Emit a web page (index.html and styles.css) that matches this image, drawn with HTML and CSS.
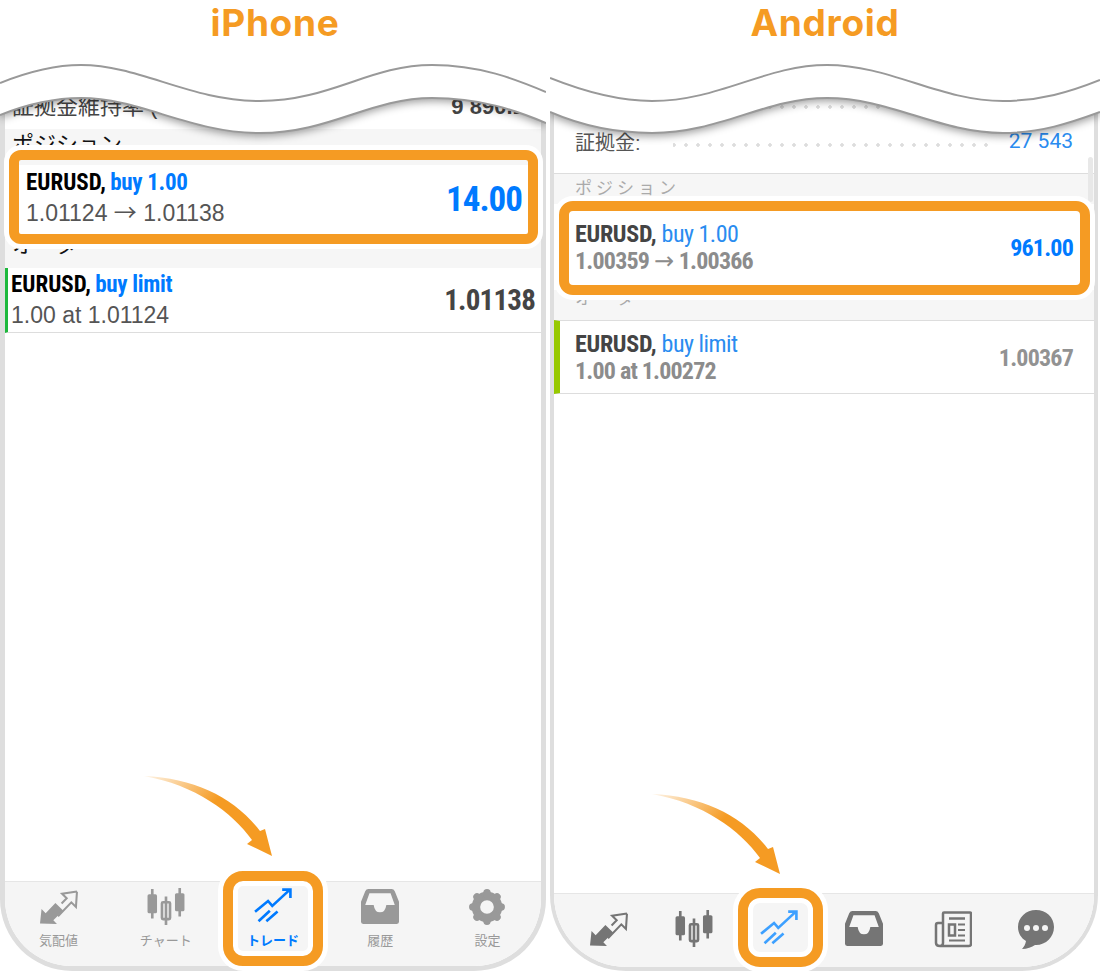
FILE: index.html
```html
<!DOCTYPE html>
<html lang="ja">
<head>
    <meta charset="UTF-8">
    <meta name="viewport" content="width=device-width, initial-scale=1.0">
    <title>iPhone / Android</title>
    <link rel="stylesheet" href="styles.css">
</head>
<body>
    <svg class="defs" width="0" height="0">
        <defs>
            <linearGradient id="arrowFade" x1="0" y1="0" x2="1" y2="0.6">
                <stop offset="0" stop-color="#f59b23" stop-opacity="0.1"/>
                <stop offset="0.55" stop-color="#f59b23"/>
            </linearGradient>
        </defs>
        <symbol id="i-exchange" viewBox="0 0 37 36">
            <path fill="currentColor" d="M0 34 1.500 20l4 4 9.500-10 7.500 7.500L13 31l3.500 3.500z"/>
            <path fill="none" stroke="currentColor" stroke-width="2" d="M36 3 21.500 5l4.500 4.500-5 5M36 3l-1 15-4.500-4.500L17.500 27"/>
        </symbol>
        <symbol id="i-candles" viewBox="0 0 36 36">
            <path fill="none" stroke="currentColor" stroke-width="2.500" d="M5 1v28M18 8v27M31 0v27"/>
            <rect fill="currentColor" x="0.500" y="6" width="9" height="18" rx="1.500"/>
            <rect fill="currentColor" x="26.500" y="5" width="9" height="17" rx="1.500"/>
            <rect fill="none" stroke="currentColor" stroke-width="2.500" x="14.200" y="13.500" width="7.600" height="16" rx="1"/>
        </symbol>
        <symbol id="i-trade" viewBox="0 0 36 36">
            <path fill="none" stroke="currentColor" stroke-width="2.500" d="M1 22.500 13.300 12.300l4 4.700L33.500 2M26.700 1.500H34.500V9.500M4.300 31.500 15 21.500M11.700 31.500l10.600-9.200"/>
        </symbol>
        <symbol id="i-inbox" viewBox="0 0 36 36">
            <path fill="currentColor" fill-rule="evenodd" d="M7 1H29q2 0 3 2l4 10V32q0 2-2 2H2q-2 0-2-2V13L4 3q1-2 3-2zM8 5 4 16h8q1 7 6 7t6-7h8L28 5z"/>
        </symbol>
        <symbol id="i-gear" viewBox="0 0 36 36">
            <circle cx="18" cy="18" r="10.500" fill="none" stroke="currentColor" stroke-width="8"/>
            <path fill="none" stroke="currentColor" stroke-width="7" stroke-linecap="round" d="M18 4.500v2M18 29.500v2M4.500 18h2M29.500 18h2M8.500 8.500l1.400 1.400M26.100 26.100l1.400 1.400M27.500 8.500l-1.400 1.400M9.900 26.100l-1.400 1.400"/>
        </symbol>
        <symbol id="i-news" viewBox="0 0 38 38">
            <g fill="none" stroke="currentColor" stroke-width="2.500">
                <path d="M10 2.500q-1 0-1 1V33q0 3-3 3h29q2 0 2-2V3.500q0-1-1-1zM6 36q-4 0-4-3V15q0-2 2-2h5"/>
                <path d="M15 8.500H31"/>
                <rect x="15" y="14.500" width="6" height="11"/>
                <path d="M24 14.500h7M24 20h7M24 25.500h7M15 30.500H31" stroke-width="2"/>
            </g>
        </symbol>
        <symbol id="i-chat" viewBox="0 0 36 40">
            <path fill="currentColor" d="M18 0C8 0 0 7.500 0 17c0 6 3 11 8 14-.5 3-2 6-4 8 5 0 10-2 13-4h1c10 0 18-8 18-18S28 0 18 0z"/>
            <circle cx="9" cy="18" r="3" fill="#f5f5f5"/>
            <circle cx="18" cy="18" r="3" fill="#f5f5f5"/>
            <circle cx="27" cy="18" r="3" fill="#f5f5f5"/>
        </symbol>
        <symbol id="i-arrow" viewBox="0 0 130 82">
            <path fill="url(#arrowFade)" d="M0 0C51 2 91 22 116 55l5-2 7 27-25-12 5-4C88 36 51 9 0 0z"/>
        </symbol>
    </svg>

    <main class="sheet">
        <section class="col">
            <h2 class="title">iPhone</h2>
            <div class="phone ios">
                <div class="list">
                    <div class="summary">
                        <span>証拠金維持率 (%):</span>
                        <b>9 890.17</b>
                    </div>
                    <div class="group first">ポジション</div>
                    <div class="trade position">
                        <div class="trade-text">
                            <p class="pair">EURUSD, <span class="side">buy 1.00</span></p>
                            <p class="detail">1.01124 <span class="to">→</span> 1.01138</p>
                        </div>
                        <b class="amount">14.00</b>
                        <span class="mark"></span>
                    </div>
                    <div class="group">オーダー</div>
                    <div class="trade order">
                        <div class="trade-text">
                            <p class="pair">EURUSD, <span class="side">buy limit</span></p>
                            <p class="detail">1.00 at 1.01124</p>
                        </div>
                        <b class="amount">1.01138</b>
                    </div>
                </div>
                <nav class="tabs">
                    <a class="tab"><svg class="icon"><use href="#i-exchange"/></svg><span>気配値</span></a>
                    <a class="tab"><svg class="icon"><use href="#i-candles"/></svg><span>チャート</span></a>
                    <a class="tab active"><svg class="icon"><use href="#i-trade"/></svg><span>トレード</span><i class="mark"></i></a>
                    <a class="tab"><svg class="icon"><use href="#i-inbox"/></svg><span>履歴</span></a>
                    <a class="tab"><svg class="icon"><use href="#i-gear"/></svg><span>設定</span></a>
                </nav>
                <svg class="hint"><use href="#i-arrow"/></svg>
                <svg class="wave" viewBox="0 0 546 90" preserveAspectRatio="none">
                    <path class="wave-fill" d="M0 0H546V68C515 55 480 43 432 43 370 43 330 78 260 78 190 78 140 43 81 43 55 43 25 50 0 60z"/>
                    <path class="wave-line" d="M0 28C25 18 55 10 81 10 140 10 190 46 260 46 330 46 370 10 432 10 480 10 515 24 546 37"/>
                    <path class="wave-line" d="M0 60C25 50 55 43 81 43 140 43 190 78 260 78 330 78 370 43 432 43 480 43 515 55 546 68"/>
                </svg>
            </div>
        </section>

        <section class="col">
            <h2 class="title">Android</h2>
            <div class="phone android">
                <i class="scrollbar"></i>
                <div class="list">
                    <div class="summary">
                        <div class="balance"><span></span><i class="dots"></i><b></b></div>
                        <div class="balance"><span>証拠金:</span><i class="dots"></i><b>27 543</b></div>
                    </div>
                    <div class="group first">ポジション</div>
                    <div class="trade position">
                        <div class="trade-text">
                            <p class="pair">EURUSD, <span class="side">buy 1.00</span></p>
                            <p class="detail">1.00359 <span class="to">→</span> 1.00366</p>
                        </div>
                        <b class="amount">961.00</b>
                        <span class="mark"></span>
                    </div>
                    <div class="group">オーダー</div>
                    <div class="trade order">
                        <div class="trade-text">
                            <p class="pair">EURUSD, <span class="side">buy limit</span></p>
                            <p class="detail">1.00 at 1.00272</p>
                        </div>
                        <b class="amount">1.00367</b>
                    </div>
                </div>
                <nav class="tabs">
                    <a class="tab"><svg class="icon"><use href="#i-exchange"/></svg></a>
                    <a class="tab"><svg class="icon"><use href="#i-candles"/></svg></a>
                    <a class="tab active"><svg class="icon"><use href="#i-trade"/></svg><i class="mark"></i></a>
                    <a class="tab"><svg class="icon"><use href="#i-inbox"/></svg></a>
                    <a class="tab tab-news"><svg class="icon"><use href="#i-news"/></svg></a>
                    <a class="tab tab-chat"><svg class="icon"><use href="#i-chat"/></svg></a>
                </nav>
                <svg class="hint"><use href="#i-arrow"/></svg>
                <svg class="wave" viewBox="0 0 550 90" preserveAspectRatio="none">
                    <path class="wave-fill" d="M0 0H550V57C520 68 490 78 453 78 390 78 340 43 277 43 215 43 170 78 102 78 65 78 30 70 0 57z"/>
                    <path class="wave-line" d="M0 23C30 35 65 46 102 46 170 46 215 10 277 10 340 10 390 46 453 46 490 46 520 37 550 25"/>
                    <path class="wave-line" d="M0 57C30 70 65 78 102 78 170 78 215 43 277 43 340 43 390 78 453 78 490 78 520 68 550 57"/>
                </svg>
            </div>
        </section>
    </main>
</body>
</html>
```

FILE: styles.css
```css
* {
    box-sizing: border-box;
}
body {
    margin: 0;
    background: #fff;
    font-family: "Liberation Sans", "Noto Sans CJK JP", sans-serif;
}
p {
    margin: 0;
}
.defs {
    position: absolute;
}
.sheet {
    display: grid;
    grid-template-columns: 550px 550px;
    height: 971px;
    overflow: hidden;
}
.col {
    display: flex;
    flex-direction: column;
}
.title {
    margin: 0;
    height: 55px;
    text-align: center;
    font-family: Inter, "Noto Sans", sans-serif;
    font-size: 37px;
    line-height: normal;
    letter-spacing: 0.7px;
    font-weight: 700;
    color: #f59b23;
}
.phone {
    position: relative;
    flex: 1;
    display: flex;
    flex-direction: column;
    border-style: solid;
    border-color: #dedede;
    border-top: none;
}
.list {
    flex: 1;
}
.summary b,
.amount {
    font-weight: 700;
}
.group {
    background: #f6f6f6;
}
.trade {
    position: relative;
    display: flex;
    justify-content: space-between;
    align-items: center;
    background: #fff;
}
.pair {
    font-family: "Liberation Sans Narrow", "Roboto Condensed", "Liberation Sans", sans-serif;
    font-weight: 700;
}
.to {
    font-family: "Noto Sans CJK JP", sans-serif;
    font-weight: 400;
    line-height: 0;
}
.amount {
    font-family: "Liberation Sans Narrow", "Roboto Condensed", "Liberation Sans", sans-serif;
}
.mark {
    position: absolute;
    border: 10px solid #f59b23;
    box-shadow: 0 0 0 5px #fff;
    pointer-events: none;
}
.tabs {
    display: flex;
    background: #f5f5f5;
    border-top: 1px solid #e6e6e6;
}
.tab {
    position: relative;
    flex: 1;
    display: flex;
    flex-direction: column;
    align-items: center;
}
.tab .mark {
    box-shadow: 0 0 0 5px #fff, inset 0 0 0 5px #fff;
}
.hint {
    position: absolute;
    width: 130px;
    height: 82px;
    overflow: visible;
}
.wave {
    position: absolute;
    top: 0;
    height: 90px;
}
.wave-fill {
    fill: #fff;
    filter: drop-shadow(0 3px 4px rgba(0, 0, 0, 0.4));
}
.wave-line {
    fill: none;
    stroke: #999;
    stroke-width: 2;
}

/* iPhone */
.ios {
    width: 546px;
    border-width: 0 5px 5px;
    border-radius: 0 0 72px 72px;
}
.ios .summary {
    display: flex;
    justify-content: space-between;
    align-items: flex-end;
    height: 74px;
    padding: 0 4px 8px 7px;
    font-size: 22px;
    line-height: 28px;
    color: #444;
}
.ios .group {
    height: 30px;
    padding-left: 7px;
    font-size: 22px;
    line-height: 14px;
    color: #111;
}
.ios .group.first {
    height: 36px;
    line-height: 32px;
}
.ios .trade {
    height: 73px;
}
.ios .position {
    padding: 0 19px 7px 21px;
}
.ios .position .mark {
    top: -15px;
    bottom: -6px;
    left: 4px;
    right: 3px;
    border-radius: 12px;
}
.ios .order {
    height: 65px;
    padding: 0 6px 0 3px;
    border-left: 3px solid #1db83c;
    border-bottom: 1px solid #ddd;
}
.ios .pair {
    font-size: 23px;
    line-height: 30px;
    color: #000;
}
.ios .side {
    margin-left: -1px;
    letter-spacing: -0.3px;
}
.ios .side,
.ios .position .amount {
    color: #007aff;
}
.ios .detail {
    font-size: 23px;
    line-height: 30px;
    color: #555;
}
.ios .position .amount {
    margin-top: 2px;
    font-size: 35px;
    letter-spacing: -1px;
}
.ios .order .amount {
    font-size: 29px;
    letter-spacing: -0.8px;
    color: #444;
}
.ios .tabs {
    height: 85px;
    border-radius: 0 0 67px 67px;
}
.ios .tab {
    padding-top: 6px;
    color: #999;
    font-size: 13px;
}
.ios .tab span {
    margin-top: 6px;
    line-height: 18px;
}
.ios .icon {
    width: 38px;
    height: 38px;
}
.ios .tab.active {
    color: #007aff;
    font-weight: 700;
}
.ios .tab .mark {
    top: -11px;
    bottom: 0;
    left: 4px;
    right: 4px;
    border-radius: 20px;
}
.ios .hint {
    top: 721px;
    left: 139px;
}
.ios .wave {
    left: -5px;
    width: 546px;
}

/* Android */
.android {
    width: 548px;
    border-width: 0 4px 4px;
    border-radius: 0 0 76px 76px;
}
.scrollbar {
    position: absolute;
    top: 102px;
    right: 1px;
    width: 5px;
    height: 45px;
    border-radius: 3px;
    background: #e8e8e8;
}
.android .summary {
    padding: 29px 0 13px;
    border-bottom: 1px solid #ddd;
}
.balance {
    display: grid;
    grid-template-columns: 98px 1fr 83px;
    align-items: center;
    height: 38px;
    padding: 0 21px;
    font-size: 20px;
    color: #555;
}
.balance b {
    justify-self: end;
    font-family: Roboto, sans-serif;
    font-size: 21px;
    font-weight: 400;
    color: #2a8cf0;
}
.dots {
    height: 4px;
    margin-top: 8px;
    background: radial-gradient(circle, #ddd 1.500px, transparent 2px) -5px center / 12px 4px repeat-x;
}
.android .group {
    height: 30px;
    padding-left: 21px;
    font-size: 17px;
    line-height: 18px;
    letter-spacing: 4px;
    color: #aaa;
}
.android .group.first {
    line-height: 30px;
}
.android .trade {
    height: 86px;
    padding: 1px 21px 0;
}
.android .position .mark {
    top: -3px;
    bottom: -5px;
    left: 5px;
    right: 4px;
    border-radius: 14px;
}
.android .order {
    height: 74px;
    padding-left: 15px;
    border-top: 1px solid #ddd;
    border-left: 6px solid #97c900;
    border-bottom: 1px solid #ddd;
}
.android .pair {
    font-size: 24px;
    line-height: 27px;
    letter-spacing: -0.3px;
    color: #444;
}
.android .side {
    font-weight: 400;
    letter-spacing: -0.5px;
    color: #2a8cf0;
}
.android .detail {
    font-family: "Liberation Sans Narrow", "Roboto Condensed", "Liberation Sans", sans-serif;
    font-size: 24px;
    line-height: 26px;
    letter-spacing: -0.8px;
    font-weight: 700;
    color: #8c8c8c;
}
.android .to {
    font-family: "DejaVu Sans", sans-serif;
    letter-spacing: 0;
}
.android .amount {
    font-size: 24px;
    letter-spacing: -0.8px;
    color: #929292;
}
.android .position .amount {
    color: #007aff;
}
.android .tabs {
    height: 74px;
    padding: 0 14px 0 12px;
    border-radius: 0 0 72px 72px;
}
.android .tab {
    padding-top: 16px;
    color: #757575;
}
.android .icon {
    width: 38px;
    height: 38px;
}
.android .tab-news {
    padding-left: 4px;
}
.android .tab-chat .icon {
    height: 40px;
    margin-left: -4px;
}
.android .tab.active {
    color: #3da0ff;
}
.android .tab .mark {
    top: -6px;
    bottom: 0;
    left: 2px;
    right: -2px;
    border-radius: 22px;
}
.android .hint {
    top: 739px;
    left: 98px;
}
.android .wave {
    left: -4px;
    width: 550px;
}
```
